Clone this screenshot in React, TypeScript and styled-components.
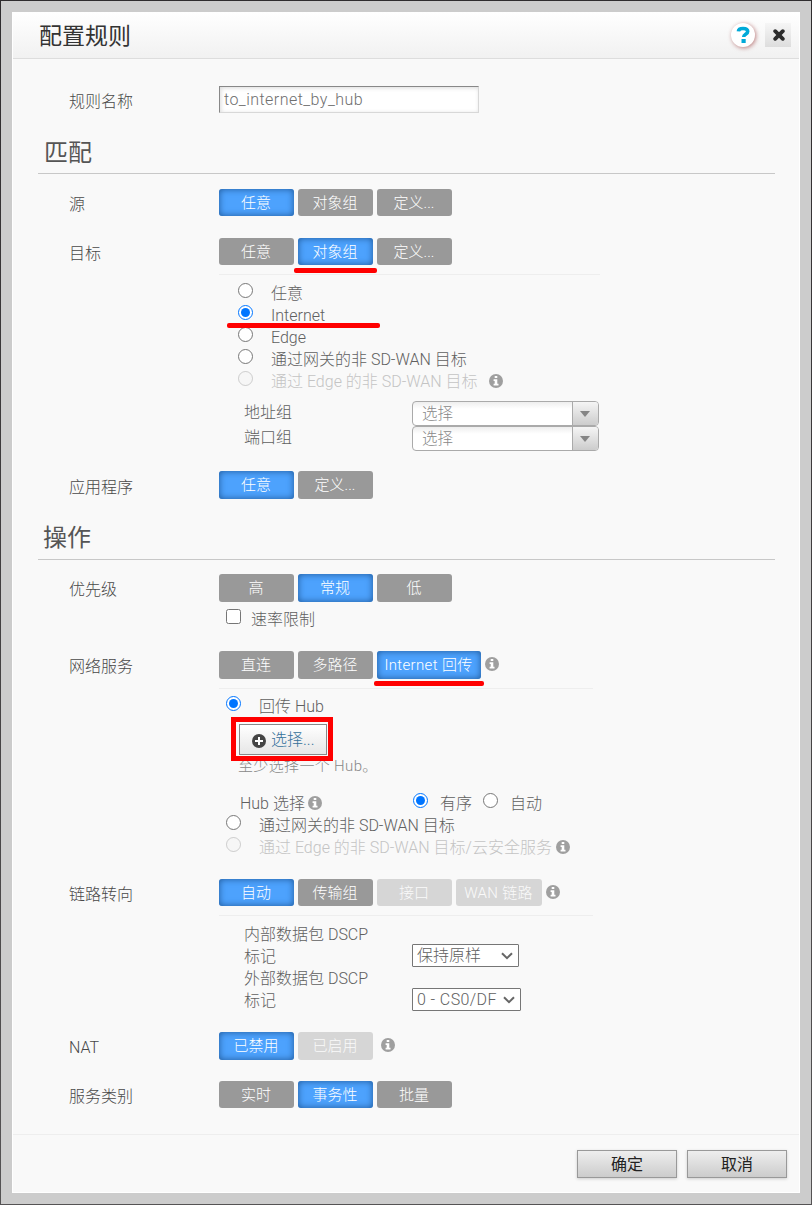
import React from "react";
import styled, { createGlobalStyle, css } from "styled-components";

const Global = createGlobalStyle`
  * { box-sizing: border-box; }
  body { margin: 0; background: #444243; }
  body, button, input {
    font-family: Roboto, "Noto Sans CJK SC", sans-serif;
    font-weight: 300;
    font-size: 16px;
    color: #484848;
  }
`;

const Backdrop = styled.div`
  width: 812px;
  height: 1205px;
  padding: 1px;
  background: linear-gradient(#2f2c2e, #555354);
`;

const Frame = styled.div`
  height: 1203px;
  padding: 11px;
  background: #ccc;
`;

const Dialog = styled.div`
  height: 1181px;
  display: flex;
  flex-direction: column;
  background: #f9f9f9;
  border: solid #fff;
  border-width: 0 1px 1px;
`;

const Header = styled.header`
  height: 47px;
  flex: none;
  display: flex;
  align-items: center;
  padding: 0 8px 0 26px;
  background: linear-gradient(#fff, #f1f1f1);
  border-bottom: 1px solid #ddd;
`;

const Title = styled.h1`
  flex: 1;
  margin: 4px 0 0;
  font-size: 23px;
  line-height: 30px;
  font-weight: 400;
  color: #333;
`;

const HelpButton = styled.button`
  width: 24px;
  height: 24px;
  margin-right: 10px;
  padding: 0;
  border: 0;
  border-radius: 50%;
  background: #fff;
  box-shadow: 1px 1px 4px rgba(150, 50, 50, 0.6);
`;

const CloseButton = styled.button`
  width: 26px;
  height: 24px;
  padding: 0 0 0 1px;
  border: 0;
  background: linear-gradient(#f6f6f6, #ddd);
  display: flex;
  align-items: center;
  justify-content: center;
`;

const Body = styled.main`
  flex: 1;
  padding: 0 24px 0 25px;
`;

const Heading = styled.h2<{ $top: number; $h: number; $bottom: number; $left: number }>`
  height: ${(p) => p.$h}px;
  margin: ${(p) => p.$top}px 0 ${(p) => p.$bottom}px;
  padding-left: ${(p) => p.$left}px;
  font-size: 24px;
  line-height: ${(p) => p.$h - 3}px;
  font-weight: 400;
  color: #555;
  border-bottom: 1px solid #c8c8c8;
`;

const Field = styled.section<{ $h: number }>`
  display: grid;
  grid-template-columns: 150px 1fr;
  height: ${(p) => p.$h}px;
  padding-left: 31px;
`;

const Label = styled.label<{ $top?: number }>`
  padding-top: ${(p) => p.$top ?? 4}px;
  line-height: 24px;
`;

const TextInput = styled.input`
  width: 260px;
  height: 27px;
  padding: 0 0 0 4px;
  border: 1px solid #d8d8d8;
  border-top-color: #888;
  border-left-color: #888;
  background: #fff;
  box-shadow: inset 1px 1px 4px rgba(0, 0, 0, 0.15);
  letter-spacing: 0.45px;
  color: #6f6f6f;
`;

const Group = styled.div<{ $h?: number }>`
  display: flex;
  height: ${(p) => p.$h ?? 27}px;
  gap: 4px;
  align-items: stretch;
`;

const Segment = styled.button<{ $on?: boolean; $w?: number; $spacing?: number }>`
  position: relative;
  width: ${(p) => p.$w ?? 75}px;
  padding: 0 1px 0 0;
  border: 0;
  border-radius: 3px;
  background: #999;
  color: #fff;
  font-size: 15px;
  line-height: 26px;
  letter-spacing: ${(p) => p.$spacing ?? 0}px;
  white-space: nowrap;
  ${(p) => p.$on && css`
    background: #4da2fd;
    box-shadow: inset 0 0 7px #1f5796;
  `}
  &:disabled { background: #d6d6d6; color: #fafafa; }
`;

const Divider = styled.div<{ $w?: number }>`
  width: ${(p) => p.$w ?? 374}px;
  height: 1px;
  margin-top: 9px;
  background: #eee;
`;

const Stroke = styled.span<{ $x: number; $y: number; $w: number }>`
  position: absolute;
  left: ${(p) => p.$x}px;
  top: ${(p) => p.$y}px;
  width: ${(p) => p.$w}px;
  height: 5px;
  border-radius: 2px;
  background: #f00;
  z-index: 2;
`;

const Options = styled.div<{ $top: number; $left: number }>`
  padding: ${(p) => p.$top}px 0 0 ${(p) => p.$left}px;
`;

const Option = styled.label<{ $off?: boolean }>`
  position: relative;
  display: flex;
  height: 22px;
  line-height: 24px;
  white-space: nowrap;
  color: ${(p) => (p.$off ? "#c4c4c4" : "#606060")};
`;

const Choice = styled.input<{ $gap?: number }>`
  width: 15px;
  height: 15px;
  margin: 1px ${(p) => p.$gap ?? 18}px 0 0;
  flex: none;
  accent-color: #0075ff;
`;

const Setting = styled.div<{ $h: number }>`
  display: grid;
  grid-template-columns: 168px auto;
  justify-content: start;
  height: ${(p) => p.$h}px;
  padding-left: 25px;
  line-height: ${(p) => (p.$h > 30 ? 22 : 24)}px;
  color: #606060;
`;

const SettingName = styled.div`
  width: 130px;
`;

const Combo = styled.div`
  width: 187px;
  height: 25px;
  display: flex;
  border: 1px solid #aaa;
  border-radius: 4px;
  background: linear-gradient(#eee 0, #fff 30%);
  overflow: hidden;
  color: #888;
  line-height: 24px;
  font-size: 15.5px;
`;

const ComboText = styled.span`
  flex: 1;
  padding-left: 9px;
`;

const ComboArrow = styled.span`
  width: 26px;
  padding-right: 1px;
  border-left: 1px solid #aaa;
  background: linear-gradient(#f5f5f5, #ccc);
  display: flex;
  align-items: center;
  justify-content: center;
`;

const Dropdown = styled.div<{ $w: number; $spacing?: number }>`
  width: ${(p) => p.$w}px;
  height: 23px;
  margin-top: 20px;
  padding: 0 5px 0 4px;
  display: flex;
  align-items: center;
  justify-content: space-between;
  border: 1px solid #767676;
  border-radius: 1px;
  background: #fff;
  line-height: 23px;
  letter-spacing: ${(p) => p.$spacing ?? 0}px;
  white-space: nowrap;
`;

const PickButton = styled.button`
  position: relative;
  display: flex;
  align-items: center;
  width: 88px;
  height: 31px;
  margin: 7px 0 0 13px;
  padding: 0 0 0 12px;
  gap: 5px;
  border: 1px solid #888;
  background: linear-gradient(#fff, #e6e6e6);
  line-height: 28px;
  color: #34709a;
`;

const PickIcon = styled.svg`
  flex: none;
  margin-top: 2px;
`;

const PickText = styled.span`
  height: 28px;
`;

const PickOutline = styled.span`
  position: absolute;
  inset: -8px -7px -7px -9px;
  border: 5px solid #f00;
`;

const Hint = styled.p`
  margin: 0 0 0 12px;
  height: 37px;
  line-height: 23px;
  font-size: 15px;
  letter-spacing: 0.35px;
  color: #888;
`;

const HubRow = styled.div`
  display: flex;
  height: 22px;
  padding-left: 14px;
  line-height: 24px;
  color: #606060;
`;

const HubName = styled.span`
  display: flex;
  width: 173px;
  gap: 3px;
`;

const HubMode = styled.label`
  display: flex;
  width: 70px;
`;

const Footer = styled.footer`
  height: 58px;
  flex: none;
  display: flex;
  justify-content: flex-end;
  gap: 10px;
  padding: 15px 12px 0 0;
  border-top: 1px solid #eee;
`;

const Action = styled.button`
  width: 100px;
  height: 28px;
  padding: 0;
  border: 1px solid #999;
  background: linear-gradient(#eee, #ccc);
  box-shadow: 0 1px 3px rgba(0, 0, 0, 0.18);
  font-weight: 400;
  line-height: 25px;
  color: #222;
`;

const InfoSvg = styled.svg<{ $ml?: number; $mt?: number }>`
  flex: none;
  margin: ${(p) => p.$mt ?? 7}px 0 0 ${(p) => p.$ml ?? 0}px;
`;

const Info = ({ ml, mt }: { ml?: number; mt?: number }) => (
  <InfoSvg $ml={ml} $mt={mt} width="14" height="14" viewBox="0 0 14 14">
    <circle cx="7" cy="7" r="7" fill="#9f9f9f" />
    <path d="M5.7 2h2.6v2.1H5.7zM4.6 5.3h3.7v4.5h1.2v1.8H4.6V9.8h1.1V7.1H4.6z" fill="#fff" />
  </InfoSvg>
);

const Triangle = () => (
  <svg width="10" height="6" viewBox="0 0 10 6"><path d="M0 0h10L5 6z" fill="#858585" /></svg>
);

const Chevron = () => (
  <svg width="12" height="8" viewBox="0 0 12 8">
    <path d="M1 1.2l5 5 5-5" fill="none" stroke="#666" strokeWidth="2" />
  </svg>
);

const Select = () => (
  <Combo><ComboText>选择</ComboText><ComboArrow><Triangle /></ComboArrow></Combo>
);

export default function App() {
  return (
    <Backdrop>
      <Global />
      <Frame>
        <Dialog>
          <Header>
            <Title>配置规则</Title>
            <HelpButton aria-label="帮助">
              <svg width="24" height="24" viewBox="0 0 24 24">
                <path d="M7.4 8.3C7.6 6 9.3 5.5 12 5.5c2.8 0 4.7 1 4.7 3.1 0 2.8-4 2.7-4 5.3" fill="none" stroke="#00a9d8" strokeWidth="3.6" />
                <path d="M10.5 16h4.2v4h-4.2z" fill="#00a9d8" />
              </svg>
            </HelpButton>
            <CloseButton aria-label="关闭">
              <svg width="12" height="12" viewBox="0 0 12 12">
                <path d="M2.2 2.2l7.6 7.6M9.8 2.2L2.2 9.8" stroke="#2b2b2b" strokeWidth="3.8" strokeLinecap="round" />
              </svg>
            </CloseButton>
          </Header>

          <Body>
            <Options $top={27} $left={0}>
              <Field $h={27}>
                <Label>规则名称</Label>
                <TextInput defaultValue="to_internet_by_hub" />
              </Field>
            </Options>

            <Heading $top={22} $h={39} $bottom={15} $left={6}>匹配</Heading>

            <Field $h={49}>
              <Label>源</Label>
              <Group>
                <Segment $on>任意</Segment>
                <Segment>对象组</Segment>
                <Segment>定义...</Segment>
              </Group>
            </Field>

            <Field $h={233}>
              <Label>目标</Label>
              <div>
                <Group>
                  <Segment>任意</Segment>
                  <Segment $on>对象组<Stroke $x={-4} $y={30} $w={83} /></Segment>
                  <Segment>定义...</Segment>
                </Group>
                <Divider $w={381} />
                <Options $top={7} $left={19}>
                  <Option><Choice type="radio" name="dest" />任意</Option>
                  <Option>
                    <Choice type="radio" name="dest" defaultChecked />Internet
                    <Stroke $x={-11} $y={19} $w={153} />
                  </Option>
                  <Option><Choice type="radio" name="dest" />Edge</Option>
                  <Option><Choice type="radio" name="dest" />通过网关的非 SD-WAN 目标</Option>
                  <Option $off>
                    <Choice type="radio" name="dest" disabled />通过 Edge 的非 SD-WAN 目标
                    <Info ml={11} mt={4} />
                  </Option>
                </Options>
                <Options $top={9} $left={0}>
                  <Setting $h={25}><SettingName>地址组</SettingName><Select /></Setting>
                  <Setting $h={25}><SettingName>端口组</SettingName><Select /></Setting>
                </Options>
              </div>
            </Field>

            <Field $h={28}>
              <Label $top={5}>应用程序</Label>
              <Group $h={28}>
                <Segment $on>任意</Segment>
                <Segment>定义...</Segment>
              </Group>
            </Field>

            <Heading $top={20} $h={41} $bottom={14} $left={5}>操作</Heading>

            <Field $h={77}>
              <Label>优先级</Label>
              <div>
                <Group $h={28}>
                  <Segment>高</Segment>
                  <Segment $on>常规</Segment>
                  <Segment>低</Segment>
                </Group>
                <Options $top={6} $left={7}>
                  <Option><Choice type="checkbox" $gap={10} />速率限制</Option>
                </Options>
              </div>
            </Field>

            <Field $h={228}>
              <Label>网络服务</Label>
              <div>
                <Group $h={28}>
                  <Segment>直连</Segment>
                  <Segment>多路径</Segment>
                  <Segment $on $w={104} $spacing={0.35}>
                    Internet 回传<Stroke $x={-3} $y={30} $w={110} />
                  </Segment>
                  <Info mt={6} />
                </Group>
                <Divider />
                <Options $top={6} $left={7}>
                  <Option><Choice type="radio" name="service" defaultChecked />回传 Hub</Option>
                  <PickButton>
                    <PickIcon width="14" height="14" viewBox="0 0 14 14">
                      <circle cx="7" cy="7" r="7" fill="#444" />
                      <path d="M7 3v8M3 7h8" stroke="#fff" strokeWidth="2" />
                    </PickIcon>
                    <PickText>选择...</PickText>
                    <PickOutline />
                  </PickButton>
                  <Hint>至少选择一个 Hub。</Hint>
                  <HubRow>
                    <HubName>Hub 选择<Info mt={4} /></HubName>
                    <HubMode><Choice type="radio" name="mode" defaultChecked $gap={12} />有序</HubMode>
                    <HubMode><Choice type="radio" name="mode" $gap={12} />自动</HubMode>
                  </HubRow>
                  <Option><Choice type="radio" name="service" />通过网关的非 SD-WAN 目标</Option>
                  <Option $off>
                    <Choice type="radio" name="service" disabled />通过 Edge 的非 SD-WAN 目标/云安全服务
                    <Info ml={4} mt={4} />
                  </Option>
                </Options>
              </div>
            </Field>

            <Field $h={153}>
              <Label>链路转向</Label>
              <div>
                <Group>
                  <Segment $on>自动</Segment>
                  <Segment>传输组</Segment>
                  <Segment disabled>接口</Segment>
                  <Segment disabled $w={86} $spacing={0.3}>WAN 链路</Segment>
                  <Info mt={6} />
                </Group>
                <Divider />
                <Options $top={8} $left={0}>
                  <Setting $h={44}>
                    <SettingName>内部数据包 DSCP 标记</SettingName>
                    <Dropdown $w={107}>保持原样<Chevron /></Dropdown>
                  </Setting>
                  <Setting $h={44}>
                    <SettingName>外部数据包 DSCP 标记</SettingName>
                    <Dropdown $w={109} $spacing={0.4}>0 - CS0/DF<Chevron /></Dropdown>
                  </Setting>
                </Options>
              </div>
            </Field>

            <Field $h={49}>
              <Label>NAT</Label>
              <Group $h={28}>
                <Segment $on>已禁用</Segment>
                <Segment disabled>已启用</Segment>
                <Info ml={4} mt={6} />
              </Group>
            </Field>

            <Field $h={27}>
              <Label>服务类别</Label>
              <Group>
                <Segment>实时</Segment>
                <Segment $on>事务性</Segment>
                <Segment>批量</Segment>
              </Group>
            </Field>
          </Body>

          <Footer>
            <Action>确定</Action>
            <Action>取消</Action>
          </Footer>
        </Dialog>
      </Frame>
    </Backdrop>
  );
}
